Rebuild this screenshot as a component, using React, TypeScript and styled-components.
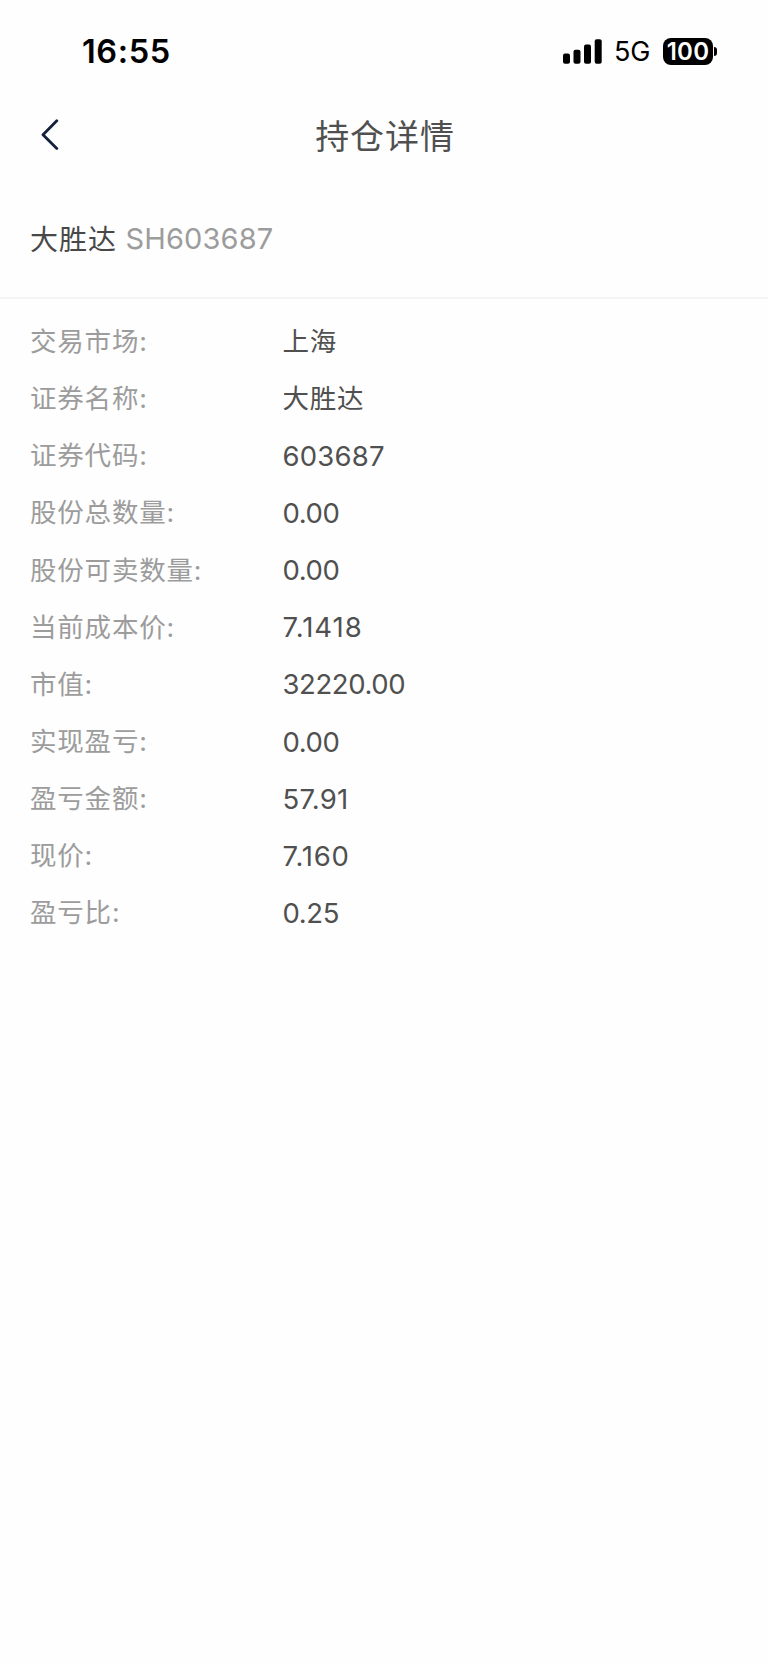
import React from "react";
import styled, { createGlobalStyle } from "styled-components";

const GlobalStyle = createGlobalStyle`
  * { box-sizing: border-box; }
  body {
    margin: 0;
    background: #fefefe;
    font-family: Inter, "Noto Sans CJK SC", sans-serif;
  }
`;

const Screen = styled.div`
  width: 768px;
  height: 1664px;
  display: flex;
  flex-direction: column;
  background: #fefefe;
  overflow: hidden;
`;

const StatusBar = styled.div`
  height: 92px;
  padding: 10px 51px 0 82px;
  display: flex;
  align-items: center;
  justify-content: space-between;
  color: #000;
`;

const Time = styled.span`
  padding-top: 2px;
  font-size: 32.5px;
  font-weight: 600;
  line-height: 40px;
  letter-spacing: 0.6px;
`;

const Indicators = styled.div`
  display: flex;
  align-items: center;
`;

const Network = styled.span`
  margin: 2px 13px 0 12px;
  width: 36px;
  font-size: 27px;
  line-height: 32px;
  letter-spacing: -0.1px;
`;

const Battery = styled.div`
  display: flex;
  align-items: center;
  gap: 1px;
`;

const BatteryBody = styled.div`
  width: 50px;
  height: 27px;
  border-radius: 8px;
  background: #000;
  color: #fff;
  font-size: 24px;
  font-weight: 600;
  line-height: 27px;
  letter-spacing: 0.3px;
  text-align: center;
`;

const BatteryCap = styled.div`
  width: 3px;
  height: 9px;
  border-radius: 0 4px 4px 0;
  background: #000;
`;

const NavBar = styled.header`
  height: 88px;
  padding: 0 40px;
  display: grid;
  grid-template-columns: 40px 1fr 40px;
  align-items: center;
`;

const BackButton = styled.button`
  display: flex;
  padding: 0 0 2px;
  border: 0;
  background: none;
`;

const Title = styled.h1`
  margin: 0;
  padding: 2px 0 0 2px;
  font-size: 34px;
  font-weight: 400;
  line-height: 44px;
  letter-spacing: 0.9px;
  text-align: center;
  color: #505050;
`;

const Security = styled.section`
  height: 119px;
  padding: 1px 30px 0;
  display: flex;
  align-items: center;
  gap: 8px;
  line-height: 40px;
  border-bottom: 2px solid #f5f5f5;
`;

const SecurityName = styled.span`
  padding-top: 1px;
  font-size: 28px;
  letter-spacing: 1px;
  color: #484848;
`;

const SecurityCode = styled.span`
  padding-left: 0.5px;
  font-size: 29px;
  letter-spacing: 0.15px;
  color: #9c9c9c;
`;

const Details = styled.dl`
  margin: 0;
  padding: 13.5px 30px 0;
`;

const Row = styled.div`
  height: 57.15px;
  display: grid;
  grid-template-columns: 252.5px 1fr;
  align-items: center;
  line-height: 40px;
`;

const Label = styled.dt`
  font-size: 26.5px;
  letter-spacing: 0.8px;
  color: #9c9c9c;
`;

const Value = styled.dd<{ $cjk?: boolean; $tracking?: number }>`
  margin: 0;
  padding-top: ${(p) => (p.$cjk ? 0 : "1px")};
  font-size: ${(p) => (p.$cjk ? "26.5px" : "27.5px")};
  letter-spacing: ${(p) => (p.$cjk ? 0.8 : p.$tracking ?? -0.4)}px;
  color: #505050;
`;

const rows: { label: string; value: string; cjk?: boolean; tracking?: number }[] = [
  { label: "交易市场:", value: "上海", cjk: true },
  { label: "证券名称:", value: "大胜达", cjk: true },
  { label: "证券代码:", value: "603687", tracking: 0.2 },
  { label: "股份总数量:", value: "0.00" },
  { label: "股份可卖数量:", value: "0.00" },
  { label: "当前成本价:", value: "7.1418", tracking: 1 },
  { label: "市值:", value: "32220.00" },
  { label: "实现盈亏:", value: "0.00" },
  { label: "盈亏金额:", value: "57.91", tracking: 0.2 },
  { label: "现价:", value: "7.160", tracking: 0.8 },
  { label: "盈亏比:", value: "0.25" },
];

const SignalIcon = () => (
  <svg width="39" height="25" viewBox="0 0 39 25" fill="#000">
    <rect x="0" y="14.5" width="7" height="10.3" rx="2" />
    <rect x="10.5" y="10.7" width="7" height="14.1" rx="2" />
    <rect x="21" y="5.5" width="7" height="19.3" rx="2" />
    <rect x="31.7" y="0.2" width="7" height="24.6" rx="2" />
  </svg>
);

const BackIcon = () => (
  <svg width="19" height="32" viewBox="0 0 19 32" fill="none">
    <path
      d="M16.8 1.8L3 15.7L16.8 29.6"
      stroke="#14203c"
      strokeWidth="2.8"
      strokeLinecap="round"
      strokeLinejoin="round"
    />
  </svg>
);

export default function App() {
  return (
    <Screen>
      <GlobalStyle />
      <StatusBar>
        <Time>16:55</Time>
        <Indicators>
          <SignalIcon />
          <Network>5G</Network>
          <Battery>
            <BatteryBody>100</BatteryBody>
            <BatteryCap />
          </Battery>
        </Indicators>
      </StatusBar>
      <NavBar>
        <BackButton aria-label="返回">
          <BackIcon />
        </BackButton>
        <Title>持仓详情</Title>
      </NavBar>
      <Security>
        <SecurityName>大胜达</SecurityName>
        <SecurityCode>SH603687</SecurityCode>
      </Security>
      <Details>
        {rows.map((row) => (
          <Row key={row.label}>
            <Label>{row.label}</Label>
            <Value $cjk={row.cjk} $tracking={row.tracking}>
              {row.value}
            </Value>
          </Row>
        ))}
      </Details>
    </Screen>
  );
}
